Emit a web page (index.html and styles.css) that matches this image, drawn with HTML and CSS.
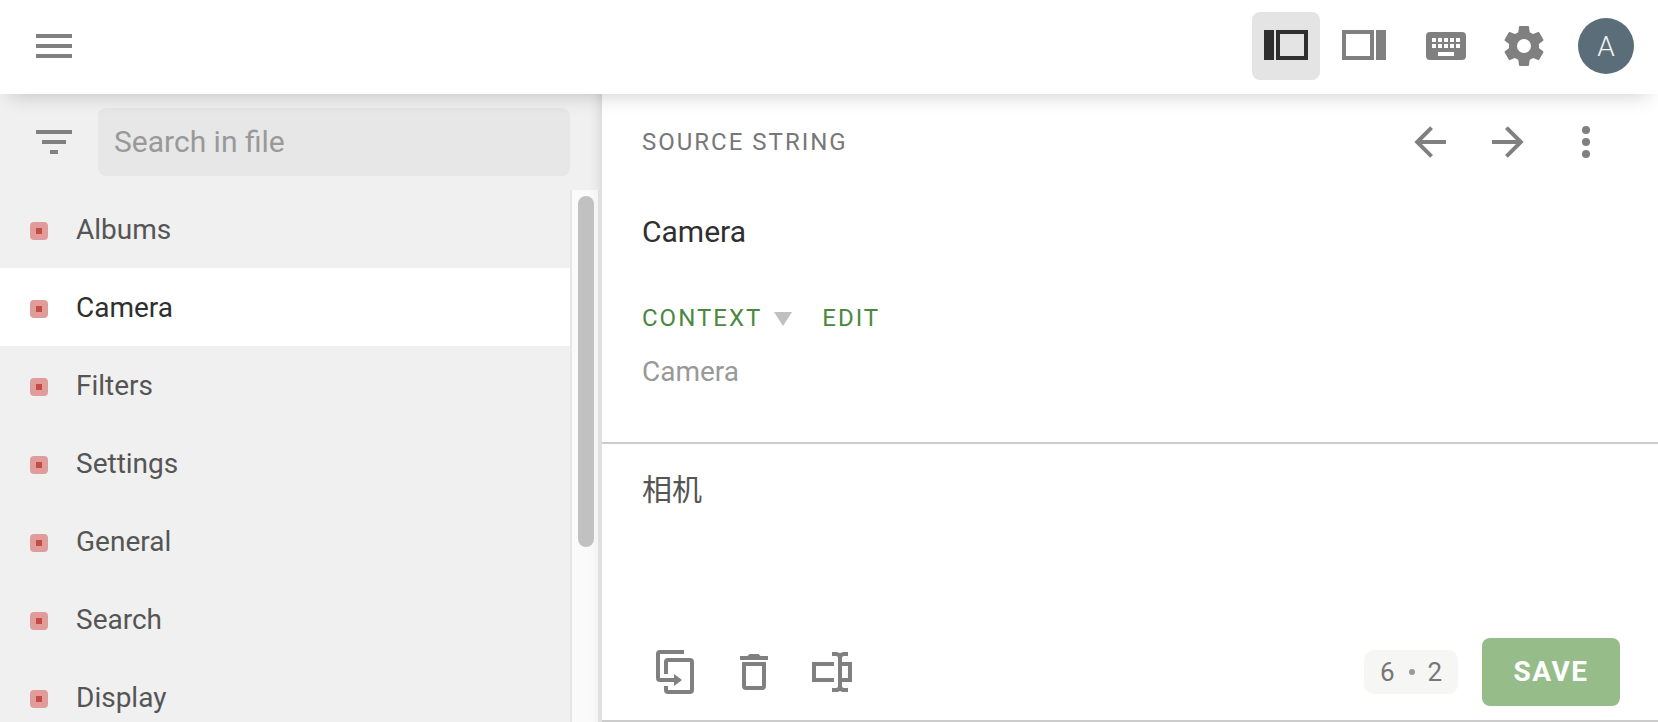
FILE: index.html
```html
<!DOCTYPE html>
<html lang="en">
<head>
<meta charset="utf-8">
<title>Editor</title>
<link rel="stylesheet" href="styles.css">
</head>
<body>
<header class="topbar">
  <svg class="icon menu" viewBox="0 0 36 24" width="36" height="24"><path d="M0 0h36v4H0zM0 10h36v4H0zM0 20h36v4H0z"/></svg>
  <nav class="tools">
    <button class="tool active"><svg class="icon" viewBox="0 0 48 48" width="48" height="48"><path fill-rule="evenodd" d="M2 8h10v30H2zM14 8h32v30H14zM18 12v22h24V12z"/></svg></button>
    <button class="tool wide"><svg class="icon" viewBox="0 0 48 48" width="48" height="48"><path fill-rule="evenodd" d="M2 8h32v30H2zM6 12v22h24V12zM36 8h10v30H36z"/></svg></button>
    <button class="tool"><svg class="icon" viewBox="0 0 48 48" width="48" height="48"><path fill-rule="evenodd" d="M8 10h32a4 4 0 0 1 4 4v20a4 4 0 0 1-4 4H8a4 4 0 0 1-4-4V14a4 4 0 0 1 4-4zM10 16h4v4h-4zM16 16h4v4h-4zM22 16h4v4h-4zM28 16h4v4h-4zM34 16h4v4h-4zM10 22h4v4h-4zM16 22h4v4h-4zM22 22h4v4h-4zM28 22h4v4h-4zM34 22h4v4h-4zM16 30h16v4H16z"/></svg></button>
    <button class="tool"><svg class="icon" viewBox="0 0 24 24" width="48" height="48"><path d="M12 15.5A3.5 3.5 0 0 1 8.5 12 3.5 3.5 0 0 1 12 8.5a3.5 3.5 0 0 1 3.5 3.5 3.5 3.5 0 0 1-3.5 3.500m7.430-2.530c.04-.32.07-.64.07-.97s-.03-.66-.07-1l2.110-1.630c.19-.15.24-.42.12-.64l-2-3.460c-.12-.22-.39-.31-.61-.22l-2.490 1c-.52-.39-1.060-.73-1.690-.98l-.37-2.650A.506.506 0 0 0 14 2h-4c-.25 0-.46.18-.5.42l-.37 2.650c-.63.25-1.170.59-1.690.98l-2.490-1c-.22-.09-.49 0-.61.22l-2 3.460c-.13.22-.07.49.12.64L4.570 11c-.04.34-.07.67-.07 1s.03.65.07.97l-2.110 1.660c-.19.15-.25.42-.12.64l2 3.460c.12.22.39.3.61.22l2.490-1.010c.52.4 1.060.74 1.690.99l.37 2.650c.04.24.25.42.5.42h4c.25 0 .46-.18.5-.42l.37-2.650c.63-.26 1.170-.59 1.690-.99l2.490 1.010c.22.08.49 0 .61-.22l2-3.460c.12-.22.07-.49-.12-.64z"/></svg></button>
    <span class="avatar">A</span>
  </nav>
</header>
<main class="workspace">
  <aside class="sidebar">
    <div class="search">
      <svg class="icon" viewBox="0 0 36 24" width="36" height="24"><path d="M0 0h36v4H0zM6 10h24v4H6zM14 20h8v4h-8z"/></svg>
      <div class="search-field">Search in file</div>
    </div>
    <div class="list-area">
      <ul class="strings">
        <li><i class="status"></i>Albums</li>
        <li class="selected"><i class="status"></i>Camera</li>
        <li><i class="status"></i>Filters</li>
        <li><i class="status"></i>Settings</li>
        <li><i class="status"></i>General</li>
        <li><i class="status"></i>Search</li>
        <li><i class="status"></i>Display</li>
      </ul>
      <div class="track"><div class="thumb"></div></div>
    </div>
  </aside>
  <section class="editor">
    <div class="source">
      <div class="source-head">
        <h2 class="label">SOURCE STRING</h2>
        <svg class="icon" viewBox="0 0 24 24" width="48" height="48"><path d="M20 11v2H8l5.500 5.500-1.420 1.420L4.160 12l7.920-7.920L13.500 5.500 8 11z"/></svg>
        <svg class="icon" viewBox="0 0 24 24" width="48" height="48"><path d="M4 11v2h12l-5.500 5.500 1.420 1.420L19.840 12l-7.920-7.920L10.500 5.500 16 11z"/></svg>
        <svg class="icon" viewBox="0 0 48 48" width="48" height="48"><circle cx="24" cy="12" r="4"/><circle cx="24" cy="24" r="4"/><circle cx="24" cy="36" r="4"/></svg>
      </div>
      <p class="source-text">Camera</p>
      <div class="context-head">
        <span class="label link">CONTEXT</span>
        <svg class="caret" viewBox="0 0 18 14" width="18" height="14"><path d="M0 0h18L9 14z"/></svg>
        <span class="label link">EDIT</span>
      </div>
      <p class="context-text">Camera</p>
    </div>
    <div class="translation">
      <p class="translated" lang="zh-CN">相机</p>
      <div class="actions">
        <svg class="outline" viewBox="0 0 48 48" width="48" height="48"><path d="M32 4H8a2 2 0 0 0-2 2v24a2 2 0 0 0 2 2h16M14 26V14a2 2 0 0 1 2-2h22a2 2 0 0 1 2 2v28a2 2 0 0 1-2 2H16a2 2 0 0 1-2-2v-4"/><path class="solid" d="M22 26l8 6-8 6z"/></svg>
        <svg class="outline" viewBox="0 0 48 48" width="48" height="48"><path d="M14 16h20v22a2 2 0 0 1-2 2H16a2 2 0 0 1-2-2z"/><path class="solid" d="M10 8h7.500l2-2h9l2 2H38v4H10z"/></svg>
        <svg class="outline" viewBox="0 0 48 48" width="48" height="48"><path d="M26 16H6v16h20M34 16h8v16h-8M24 6h4q4 0 4 4v28q0 4-4 4h-4M40 6h-4q-4 0-4 4v28q0 4 4 4h4"/></svg>
        <div class="counter"><span>6</span><i class="dot"></i><span>2</span></div>
        <button class="save">SAVE</button>
      </div>
    </div>
  </section>
</main>
</body>
</html>
```
FILE: styles.css
```css
* { box-sizing: border-box; margin: 0; padding: 0; }
body {
  width: 1658px; height: 722px; overflow: hidden;
  display: flex; flex-direction: column;
  font-family: Roboto, "Noto Sans CJK SC", sans-serif;
  font-size: 28px; color: #555; background: #fff;
}
button { border: 0; font: inherit; background: none; }
svg { display: block; flex: none; }
.icon { fill: #808080; }
.topbar {
  position: relative; z-index: 2;
  flex: none; height: 94px; padding: 0 24px 2px 36px;
  display: flex; align-items: center; justify-content: space-between;
  background: #fff;
  box-shadow: 0 10px 20px -10px rgba(0, 0, 0, .22);
}
.tools { display: flex; align-items: center; gap: 10px; }
.tool {
  width: 68px; height: 68px; border-radius: 8px;
  display: flex; align-items: center; justify-content: center;
}
.tool.active { background: #e4e4e4; }
.tool.wide { margin-right: 4px; }
.active .icon { fill: #2f2f2f; }
.avatar {
  width: 56px; height: 56px; margin-left: 10px; border-radius: 50%;
  background: #5a6d78; color: #f2f4f5;
  font-weight: 300; line-height: 57px; text-align: center;
}
.workspace { flex: 1; min-height: 0; display: flex; }
.sidebar {
  width: 602px; background: #f0f0f0;
  display: flex; flex-direction: column;
}
.search {
  flex: none; height: 96px; padding: 14px 32px 14px 36px;
  display: flex; align-items: center; gap: 26px;
  box-shadow: inset -14px 0 14px -14px rgba(0, 0, 0, .16);
}
.search-field {
  flex: 1; height: 68px; padding-left: 16px; border-radius: 8px;
  background: #e7e7e7; color: #999; font-size: 30px; line-height: 67px;
}
.list-area { flex: 1; min-height: 0; display: flex; }
.strings { flex: 1; list-style: none; overflow: hidden; }
.strings li {
  height: 78px; padding-left: 30px;
  display: flex; align-items: center; gap: 28px;
}
.strings .selected { background: #fff; color: #2f2f2f; }
.status {
  width: 18px; height: 18px; margin-top: 4px; border-radius: 4px;
  border: 6px solid #df9c9a; background: #c64b43;
}
.track {
  width: 32px; padding: 6px 4px 0 6px;
  border-left: 2px solid #e6e6e6; border-right: 4px solid #e0e0e0;
  background: linear-gradient(to left, #f3f3f3, #fafafa 8px);
}
.thumb { width: 16px; height: 351px; border-radius: 8px; background: #c1c1c1; }
.editor { flex: 1; display: flex; flex-direction: column; background: #fff; }
.source { height: 350px; padding: 24px 0 0 40px; border-bottom: 2px solid #ccc; }
.source-head { height: 48px; padding-right: 48px; display: flex; align-items: center; gap: 30px; }
.label { font-size: 24px; font-weight: 400; letter-spacing: 2px; color: #777; }
h2.label { flex: 1; }
.source-text { margin-top: 42px; font-size: 30px; line-height: 48px; color: #2f2f2f; }
.context-head { height: 40px; margin-top: 42px; display: flex; align-items: center; }
.link { color: #4b883f; }
.caret { margin: 2px 30px 0 12px; fill: #c0c0c0; }
.context-text { margin-top: 14px; line-height: 40px; color: #999; }
.translation {
  flex: 1; padding: 24px 38px 14px 40px; border-bottom: 2px solid #ccc;
  display: flex; flex-direction: column; justify-content: space-between;
}
.translated { font-size: 30px; line-height: 44px; }
.actions { display: flex; align-items: center; padding-left: 10px; gap: 30px; }
.outline { fill: none; stroke: #808080; stroke-width: 4; }
.outline .solid { fill: #808080; stroke: none; }
.counter {
  width: 94px; height: 44px; margin-left: auto; border-radius: 10px;
  display: flex; align-items: center; justify-content: center; gap: 14px;
  background: #f6f6f5; font-size: 26px; color: #777;
}
.dot { width: 6px; height: 6px; margin-right: -1px; border-radius: 50%; background: #999; }
.save {
  width: 138px; height: 68px; margin-left: -6px; padding-bottom: 2px; border-radius: 8px;
  background: #96bd89; color: #fff; font-weight: 700; letter-spacing: 1.5px;
}
```
